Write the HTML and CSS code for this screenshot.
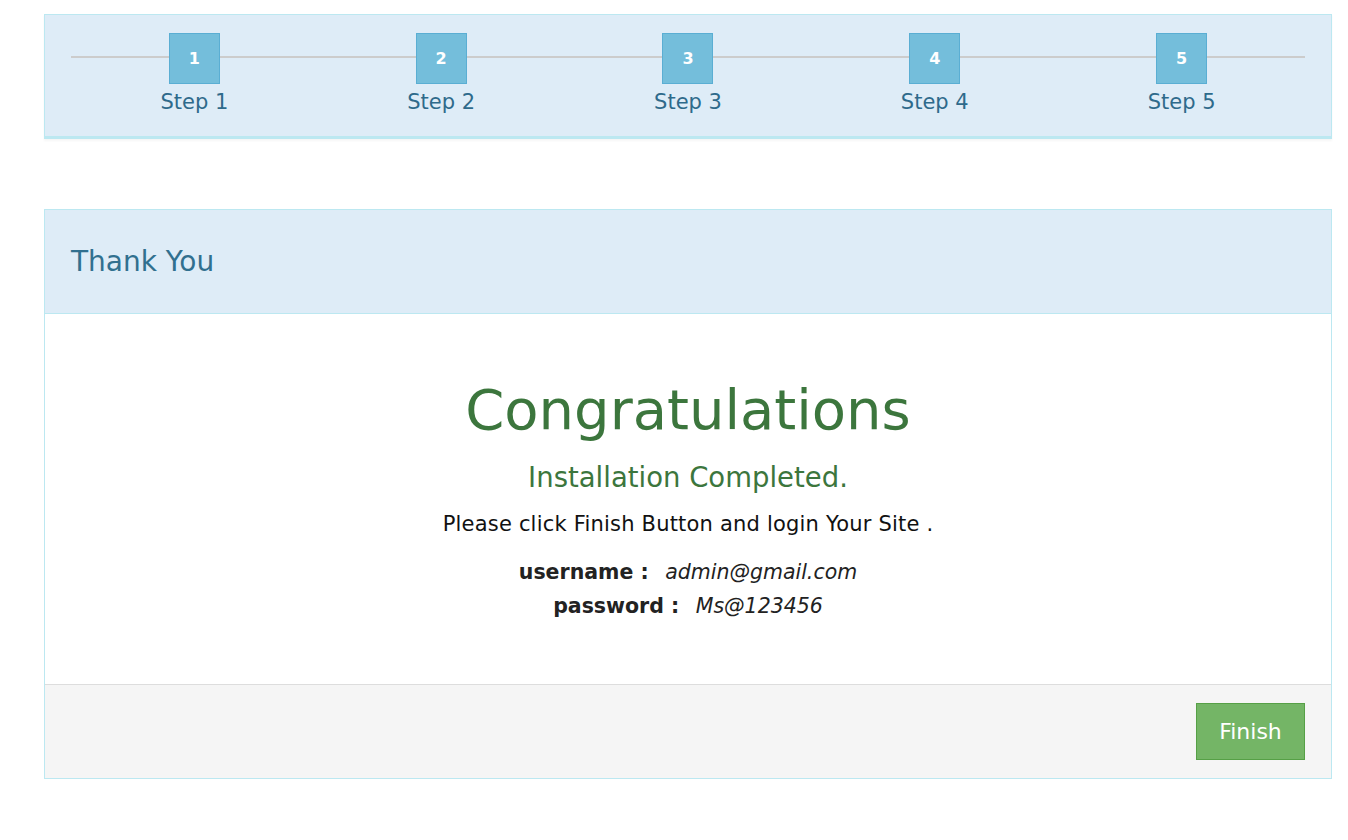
FILE: index.html
```html
<!DOCTYPE html>
<html>
<head>
<meta charset="utf-8">
<title>Install - Thank You</title>
<link rel="stylesheet" href="styles.css">
</head>
<body>
<div class="page">
  <div class="stepper">
    <div class="steps">
      <div class="step"><div class="step-box">1</div><div class="step-label">Step 1</div></div>
      <div class="step"><div class="step-box">2</div><div class="step-label">Step 2</div></div>
      <div class="step"><div class="step-box">3</div><div class="step-label">Step 3</div></div>
      <div class="step"><div class="step-box">4</div><div class="step-label">Step 4</div></div>
      <div class="step"><div class="step-box">5</div><div class="step-label">Step 5</div></div>
    </div>
  </div>

  <div class="panel">
    <div class="panel-heading">Thank You</div>
    <div class="panel-body">
      <h1 class="congrats">Congratulations</h1>
      <h3 class="completed">Installation Completed.</h3>
      <p class="notice">Please click Finish Button and login Your Site .</p>
      <p class="cred cred-first"><b>username :</b> <i>admin@gmail.com</i></p>
      <p class="cred"><b>password :</b> <i>Ms@123456</i></p>
    </div>
    <div class="panel-footer">
      <button class="btn-finish">Finish</button>
    </div>
  </div>
</div>
</body>
</html>
```

FILE: styles.css
```css
html, body {
  margin: 0;
  padding: 0;
  background: #ffffff;
}
body {
  font-family: "DejaVu Sans", "Liberation Sans", sans-serif;
}
.page {
  width: 1288px;
  margin-left: 44px;
  padding-top: 14px;
}
.stepper {
  background: #deecf7;
  border: 1px solid #bce8f1;
  border-bottom-width: 3px;
  padding: 18px 26px 22px 26px;
  box-shadow: 0 2px 2px rgba(0,0,0,0.04);
}
.steps {
  position: relative;
  display: grid;
  grid-template-columns: repeat(5, 1fr);
}
.steps::before {
  content: "";
  position: absolute;
  left: 0;
  right: 0;
  top: 23px;
  height: 2px;
  background: #cccccc;
}
.step {
  position: relative;
  display: flex;
  flex-direction: column;
  align-items: center;
}
.step-box {
  box-sizing: border-box;
  width: 51px;
  height: 51px;
  background: #74bedb;
  border: 1px solid #5aaed3;
  color: #ffffff;
  font-size: 16px;
  font-weight: 700;
  display: flex;
  align-items: center;
  justify-content: center;
}
.step-label {
  margin-top: 6px;
  font-size: 21px;
  line-height: 24px;
  color: #2e6a8b;
}
.panel {
  margin-top: 70px;
  border: 1px solid #bce8f1;
  background: #ffffff;
}
.panel-heading {
  background: #deecf7;
  border-bottom: 1px solid #bce8f1;
  padding: 37px 26px;
  font-size: 28px;
  line-height: 29px;
  color: #31708f;
}
.panel-body {
  padding: 64px 26px 61px;
  text-align: center;
}
.congrats {
  margin: 0;
  font-size: 56px;
  line-height: 64px;
  font-weight: 400;
  color: #3c763d;
}
.completed {
  margin: 18px 0 0;
  font-size: 27.5px;
  line-height: 34px;
  font-weight: 400;
  color: #3c763d;
}
.notice {
  margin: 16px 0 0;
  font-size: 21px;
  line-height: 28px;
  letter-spacing: 0.2px;
  color: #111111;
}
.cred {
  margin: 0;
  font-size: 20.5px;
  line-height: 34px;
  color: #222222;
}
.cred-first {
  margin-top: 17px;
}
.cred b {
  font-weight: 700;
  margin-right: 10px;
}
.cred i {
  font-style: italic;
}
.panel-footer {
  background: #f5f5f5;
  border-top: 1px solid #dddddd;
  padding: 18px 26px;
  display: flex;
  justify-content: flex-end;
}
.btn-finish {
  box-sizing: border-box;
  width: 109px;
  height: 57px;
  background: #74b566;
  border: 1px solid #56a046;
  color: #ffffff;
  font-family: inherit;
  font-size: 22px;
  cursor: pointer;
}
```
